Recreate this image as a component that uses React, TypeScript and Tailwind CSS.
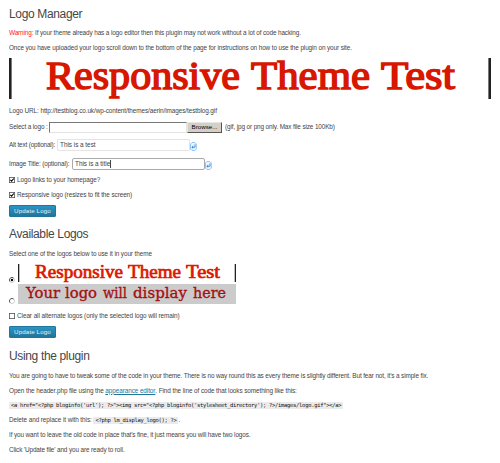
import type { ReactNode } from "react";

function Line({ className = "", children }: { className?: string; children: ReactNode }) {
  return <div className={`flex h-3.5 items-center whitespace-pre ${className}`}>{children}</div>;
}

function Heading({ className = "", children }: { className?: string; children: ReactNode }) {
  return <h2 className={`flex h-4 items-center text-[12px] tracking-[-0.35px] whitespace-pre text-[#464646] ${className}`}>{children}</h2>;
}

function UpdateButton({ className = "" }: { className?: string }) {
  return (
    <button
      className={`flex h-[12px] w-[47px] items-center justify-center rounded-[1px] border border-[#21759b] bg-linear-to-b from-[#2a95c5] to-[#21759b] text-[6.2px] tracking-[0.12px] whitespace-nowrap text-[#e4f2f8] ${className}`}
    >
      Update Logo
    </button>
  );
}

function Checkbox({ checked = false }: { checked?: boolean }) {
  return (
    <svg viewBox="0 0 6 6" className="mr-[2px] size-[6px] shrink-0">
      <rect x=".4" y=".4" width="5.2" height="5.2" fill="#fff" stroke="#555" strokeWidth=".8" />
      {checked && <path d="M1.4 2.8 2.6 4.2 4.8 1.5" fill="none" stroke="#000" strokeWidth="1.1" />}
    </svg>
  );
}

function Radio({ checked = false }: { checked?: boolean }) {
  return (
    <svg viewBox="0 0 6 6" className="size-[6px] shrink-0">
      <path d="M1.2 4.8A2.5 2.5 0 0 1 4.8 1.2" fill="none" stroke="#444" strokeWidth=".9" />
      <path d="M4.8 1.2A2.5 2.5 0 0 1 1.2 4.8" fill="none" stroke="#bbb" strokeWidth=".7" />
      {checked && <circle cx="3" cy="3" r="1.2" fill="#000" />}
    </svg>
  );
}

function FieldIcon() {
  return (
    <svg viewBox="0 0 7 9" className="mt-[3px] h-[9px] w-[7px] shrink-0">
      <path d="M2 .5h2.8l1.5 1.5v5L4.8 8.5H2L.5 7V2z" fill="#eef6ff" stroke="#7db5ec" strokeWidth=".8" />
      <path d="M5 2.3v2.9H2.6" fill="none" stroke="#3a8ee0" strokeWidth=".9" />
      <path d="M3.2 3.5 1.3 5.2l1.9 1.7z" fill="#3a8ee0" />
    </svg>
  );
}

type Word = { text: string; x: number; width: number };

function Words({ words, y }: { words: Word[]; y: number }) {
  return words.map((w) => (
    <text key={w.text} x={w.x} y={y} textLength={w.width} lengthAdjust="spacingAndGlyphs">
      {w.text}
    </text>
  ));
}

const titleWords: Word[] = [
  { text: "Responsive", x: 37, width: 194 },
  { text: "Theme", x: 242, width: 119 },
  { text: "Test", x: 372, width: 74 },
];

const smallTitleWords: Word[] = [
  { text: "Responsive", x: 17, width: 88 },
  { text: "Theme", x: 110, width: 53 },
  { text: "Test", x: 168, width: 34 },
];

const placeholderWords: Word[] = [
  { text: "Your", x: 8, width: 34 },
  { text: "logo", x: 47, width: 32 },
  { text: "will", x: 85, width: 24 },
  { text: "display", x: 115, width: 54 },
  { text: "here", x: 175, width: 33 },
];

const codeClass =
  "bg-[#ebebeb] px-[2px] font-['DejaVu_Sans_Mono',monospace] text-[5.5px] tracking-[-0.31px] leading-[7px] text-[#111]";

export default function App() {
  return (
    <main className="h-[463px] w-[500px] overflow-hidden bg-white pt-1.5 pl-[9px] font-['Liberation_Sans',Arial,sans-serif] text-[6.4px] leading-none tracking-[-0.12px] text-[#444]">
      <Heading>Logo Manager</Heading>
      <Line className="mt-1">
        <span className="text-[#ff2020]">Warning:</span> If your theme already has a logo editor then this plugin may not work without a lot of code hacking.
      </Line>
      <Line className="mt-px tracking-[-0.11px]">Once you have uploaded your logo scroll down to the bottom of the page for instructions on how to use the plugin on your site.</Line>
      <svg viewBox="0 0 482 41" className="mt-[3px] block h-[41px] w-[482px] overflow-visible">
        <path d="M0 0h2.6v41H0zM479.4 0h2.6v41h-2.6z" fill="#222" />
        <g fill="#d71700" stroke="#d71700" strokeWidth="1.5" className="font-['Liberation_Serif',serif] text-[40px] tracking-normal">
          <Words words={titleWords} y={30.5} />
        </g>
      </svg>
      <Line className="mt-[5px] tracking-[-0.09px]">Logo URL: http://testblog.co.uk/wp-content/themes/aerin/images/testblog.gif</Line>
      <Line className="mt-0.5">
        <span className="w-[40px]">Select a logo :</span>
        <span className="h-[11px] w-[138px] border border-[#e4e4e4] border-t-[#777] border-l-[#777]" />
        <span className="flex h-[11px] w-[35px] items-center justify-center border border-[#e8e6e0] border-r-[#555] border-b-[#555] bg-[#d4d0c8] text-[6.2px] tracking-normal text-black">Browse...</span>
        <span className="ml-[3px]">(gif, jpg or png only. Max file size 100Kb)</span>
      </Line>
      <Line className="mt-1">
        <span className="w-[48px] tracking-[-0.18px]">Alt text (optional):</span>
        <span className="flex h-[12px] w-[133px] items-center rounded-[1px] border border-[#e4e4e4] pl-[2px] tracking-[-0.02px]">This is a test</span>
        <FieldIcon />
      </Line>
      <Line className="mt-[5px]">
        <span className="w-[63px]">Image Title: (optional):</span>
        <span className="flex h-[12px] w-[133px] items-center rounded-[2px] border border-[#aaa] pl-[2px] tracking-[-0.02px]">
          This is a title<i className="h-[8px] w-px bg-[#444]" />
        </span>
        <FieldIcon />
      </Line>
      <Line className="mt-0.5 tracking-[-0.09px]"><Checkbox checked />Logo links to your homepage?</Line>
      <Line className="mt-px tracking-[-0.09px]"><Checkbox checked />Responsive logo (resizes to fit the screen)</Line>
      <UpdateButton className="mt-[3px]" />

      <Heading className="mt-[9px]">Available Logos</Heading>
      <Line className="mt-[5px] tracking-[-0.1px]">Select one of the logos below to use it in your theme</Line>
      <div className="mt-[3px] flex h-[19px] items-end gap-[3px]">
        <Radio checked />
        <svg viewBox="0 0 218 19" className="h-[19px] w-[218px] overflow-visible">
          <path d="M0 0h1.3v18H0zM216.7 0h1.3v18h-1.3z" fill="#222" />
          <g fill="#dc1800" stroke="#dc1800" strokeWidth=".7" className="font-['Liberation_Serif',serif] text-[18px] tracking-normal">
            <Words words={smallTitleWords} y={13.5} />
          </g>
        </svg>
      </div>
      <div className="mt-px flex h-[20px] items-end gap-[3px]">
        <Radio />
        <svg viewBox="0 0 218 20" className="h-[20px] w-[218px] overflow-visible bg-[#cbcbcb]">
          <g fill="#a51010" stroke="#a51010" strokeWidth=".35" className="font-['DejaVu_Serif',serif] text-[15px] tracking-normal">
            <Words words={placeholderWords} y={14} />
          </g>
        </svg>
      </div>
      <Line className="mt-[5px] tracking-[-0.07px]"><Checkbox />Clear all alternate logos (only the selected logo will remain)</Line>
      <UpdateButton className="mt-[3px]" />

      <Heading className="mt-[10px]">Using the plugin</Heading>
      <Line className="mt-[5px]">You are going to have to tweak some of the code in your theme. There is no way round this as every theme is slightly different. But fear not, it's a simple fix.</Line>
      <Line className="mt-px tracking-[-0.09px]">
        Open the header.php file using the <a className="text-[#21759b] underline">appearance editor</a>. Find the line of code that looks something like this:
      </Line>
      <Line>
        <code className={codeClass}>{`<a href="<?php bloginfo('url'); ?>"><img src="<?php bloginfo('stylesheet_directory'); ?>/images/logo.gif"></a>`}</code>
      </Line>
      <Line className="mt-px tracking-[-0.08px]">
        Delete and replace it with this: <code className={codeClass}>{"<?php lm_display_logo(); ?>"}</code>.
      </Line>
      <Line className="mt-px">If you want to leave the old code in place that's fine, it just means you will have two logos.</Line>
      <Line className="mt-px">Click 'Update file' and you are ready to roll.</Line>
    </main>
  );
}
